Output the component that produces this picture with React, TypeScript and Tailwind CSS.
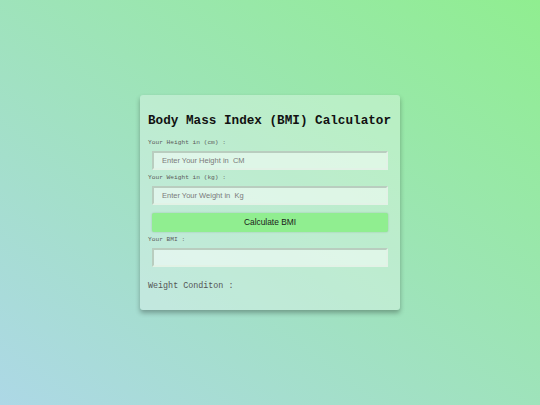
import React from "react";

export default function App() {
  const inputCls =
    "block ml-[4px] w-[236px] h-[19px] bg-[rgba(255,255,255,0.5)] border-2 border-t-[#b9cdbf] border-l-[#b9cdbf] border-b-[#e2f2e6] border-r-[#e2f2e6] pl-[8px] text-[7.5px] text-[#333] placeholder:text-[#7a7a7a] outline-none";
  return (
    <div className="w-full h-screen flex items-center justify-center bg-[linear-gradient(to_top_right,#add8e6,#90ee90)]">
      <div
        className="w-[260px] h-[215px] rounded-[3px] bg-[rgba(255,255,255,0.32)] shadow-[0_3px_5px_rgba(0,0,0,0.3)] pl-[8px] pt-[18px]"
        style={{ fontFamily: '"Liberation Mono", "Courier New", monospace' }}
      >
        <h3 className="text-[12.66px] leading-[15px] font-bold text-[#111]">
          Body Mass Index (BMI) Calculator
        </h3>
        <div className="mt-[10.5px] text-[6.2px] leading-[8px] text-[#5a5a5a]">Your Height in (cm) :</div>
        <input
          className={inputCls + " mt-[4px]"}
          style={{ fontFamily: '"Liberation Sans", Arial, sans-serif' }}
          placeholder="Enter Your Height in  CM"
        />
        <div className="mt-[4px] text-[6.2px] leading-[8px] text-[#5a5a5a]">Your Weight in (kg) :</div>
        <input
          className={inputCls + " mt-[4px]"}
          style={{ fontFamily: '"Liberation Sans", Arial, sans-serif' }}
          placeholder="Enter Your Weight in  Kg"
        />
        <button
          className="block mt-[8px] ml-[4px] w-[236px] h-[19px] bg-[#90ee90] rounded-[2px] shadow-[0_0_2px_rgba(0,0,0,0.2)] text-[8.4px] text-[#1a1a1a]"
          style={{ fontFamily: '"Liberation Sans", Arial, sans-serif' }}
        >
          Calculate BMI
        </button>
        <div className="mt-[4px] text-[6.2px] leading-[8px] text-[#5a5a5a]">Your BMI :</div>
        <input
          className={inputCls + " mt-[4px]"}
          style={{ fontFamily: '"Liberation Sans", Arial, sans-serif' }}
          readOnly
        />
        <div className="mt-[14px] text-[8.4px] leading-[10px] text-[#555]">Weight Conditon :</div>
      </div>
    </div>
  );
}
